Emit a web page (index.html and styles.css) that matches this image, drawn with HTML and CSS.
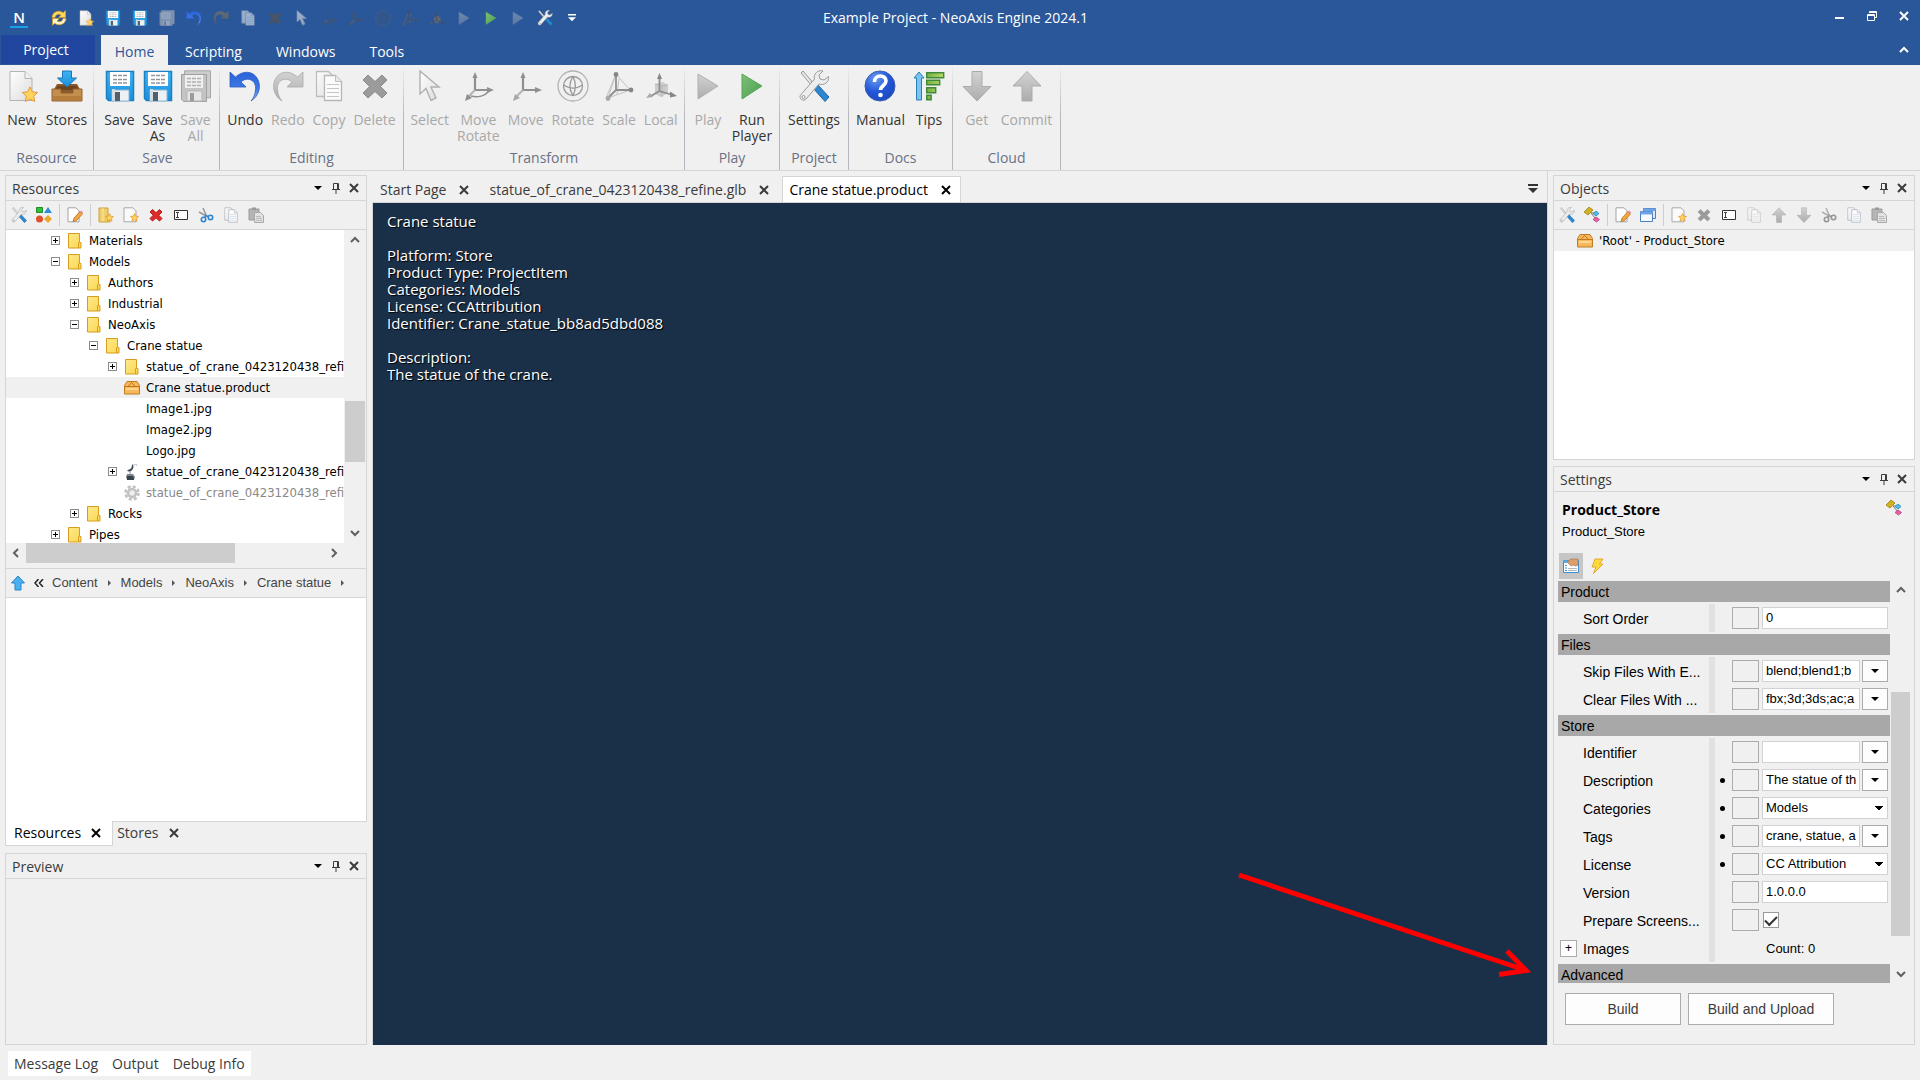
FILE: index.html
```html
<!DOCTYPE html>
<html lang="en">
<head>
<meta charset="utf-8">
<title>Example Project - NeoAxis Engine 2024.1</title>
<link rel="stylesheet" href="styles.css">
</head>
<body>
<svg class="sprite" aria-hidden="true">
  <defs>
    <linearGradient id="g-page" x1="0" y1="0" x2="1" y2="1"><stop offset="0" stop-color="#fff"/><stop offset="1" stop-color="#dcdcdc"/></linearGradient>
    <linearGradient id="g-folder" x1="0" y1="0" x2="1" y2="1"><stop offset="0" stop-color="#ffe98c"/><stop offset="1" stop-color="#fad650"/></linearGradient>
    <linearGradient id="g-blue" x1="0" y1="0" x2="0" y2="1"><stop offset="0" stop-color="#3fb4f2"/><stop offset="1" stop-color="#1a8edb"/></linearGradient>
    <linearGradient id="g-undo" x1="0" y1="0" x2="0" y2="1"><stop offset="0" stop-color="#2a62d8"/><stop offset=".6" stop-color="#3f7ae6"/><stop offset="1" stop-color="#9ab8ee"/></linearGradient>
    <linearGradient id="g-gray" x1="0" y1="0" x2="0" y2="1"><stop offset="0" stop-color="#d2d2d2"/><stop offset="1" stop-color="#adadad"/></linearGradient>
    <linearGradient id="g-green" x1="0" y1="0" x2="1" y2="1"><stop offset="0" stop-color="#7fc07a"/><stop offset="1" stop-color="#4a9f4c"/></linearGradient>
    <radialGradient id="g-help" cx=".35" cy=".25" r=".9"><stop offset="0" stop-color="#6a9bf2"/><stop offset=".5" stop-color="#2257d8"/><stop offset="1" stop-color="#1a44b8"/></radialGradient>
    <linearGradient id="g-tip" x1="0" y1="0" x2="1" y2="0"><stop offset="0" stop-color="#76b043"/><stop offset="1" stop-color="#b6da6a"/></linearGradient>
  </defs>

  <symbol id="star" viewBox="0 0 16 16"><path d="M8 1l2.200 4.600 5 .6-3.700 3.400 1 5L8 12.200l-4.500 2.400 1-5L.8 6.200l5-.6z" fill="#ffd35c" stroke="#e0932a" stroke-width="1.200"/></symbol>

  <symbol id="new" viewBox="0 0 32 32"><path d="M4 1.500h15l7 7V30.500H4z" fill="url(#g-page)" stroke="#b4b4b4"/><path d="M19 1.500v7h7" fill="#f2f2f2" stroke="#b4b4b4"/><path d="M24 17l2.300 4.800 5.200.700-3.800 3.700 1 5.300-4.700-2.500-4.700 2.500 1-5.300-3.800-3.700 5.200-.7z" fill="#ffd45e" stroke="#e19a33"/></symbol>
  <symbol id="stores" viewBox="0 0 32 32"><path d="M6 14h20l5 9H1z" fill="#8a5a2b"/><path d="M4 20l3-4h18l3 4z" fill="#6b431d"/><path d="M1 19h9v4h12v-4h9v12H1z" fill="#c48f4e" stroke="#93602c"/><path d="M2 26h28v4H2z" fill="#b57e3d"/><path d="M11.500 1h9v7h5L16 17 6.500 8h5z" fill="url(#g-blue)" stroke="#1677bb"/></symbol>
  <symbol id="save" viewBox="0 0 32 32"><path d="M2.500 1.500h27v29h-25l-2-2z" fill="url(#g-blue)" stroke="#1b7fc1" stroke-width="1.500"/><path d="M6 2h20v14H6z" fill="#fff"/><path d="M9 5.500h14M9 9.500h14M9 13h14" stroke="#8f979c" stroke-width="1.300" stroke-dasharray="4 1"/><path d="M8 20h17v11H8z" fill="#eef1f3" stroke="#8fb8d2"/><path d="M11 22h5v9h-5z" fill="#53616b"/><path d="M8 19h3v11H8z" fill="#d2dde4"/></symbol>
  <symbol id="saveall" viewBox="0 0 32 32"><path d="M4.500.800h26v27h-26z" fill="#ccc" stroke="#a5a5a5"/><path d="M1.500 4.500h25v27h-23l-2-2z" fill="#c4c4c4" stroke="#a0a0a0"/><path d="M5 5h18v13H5z" fill="#efefef"/><path d="M7 8.500h14M7 12h14M7 15.500h14" stroke="#b0b0b0" stroke-width="1.300" stroke-dasharray="4 1"/><path d="M7 21h15v10H7z" fill="#e6e6e6" stroke="#b5b5b5"/><path d="M10 23h4v8h-4z" fill="#9b9b9b"/></symbol>
  <symbol id="undo" viewBox="0 0 32 32"><path d="M1 2v15h16l-5-5c6-6 16-2 14.500 8-.500 5-2 8-4.500 11 8-5 11-15 6-23S13 1 6.500 7z" fill="url(#g-undo)" stroke="#2c5cc0" stroke-width=".8"/></symbol>
  <symbol id="redo" viewBox="0 0 32 32"><path d="M31 2v15H15l5-5C14 6 4 10 5.500 20c.500 5 2 8 4.500 11C2 26-1 16 4 8S19 1 25.500 7z" fill="url(#g-gray)" stroke="#a9a9a9" stroke-width=".8"/></symbol>
  <symbol id="copy" viewBox="0 0 32 32"><path d="M3.500 1.500h12l5 5v20h-17z" fill="url(#g-page)" stroke="#a9aeb5" stroke-width="1.300"/><path d="M11.500 5.500h11l6 6v19h-17z" fill="#fff" stroke="#a0a6ae" stroke-width="1.300"/><path d="M22.500 5.500v6h6" fill="#e8e8e8" stroke="#a9aeb5"/><path d="M14 14.500h12M14 18.500h12M14 22.500h12M14 26.500h12" stroke="#a5bad8"/></symbol>
  <symbol id="cross" viewBox="0 0 32 32"><path d="M9 5l7 6.500L23 5l5 5-6.500 6.500L28 23l-5 5-7-6.500L9 28l-5-5 6.500-6.500L4 10z" fill="#9b9b9b" stroke="#8b8b8b" stroke-width="1"/></symbol>
  <symbol id="redcross" viewBox="0 0 32 32"><path d="M9 5l7 6.500L23 5l5 5-6.500 6.500L28 23l-5 5-7-6.500L9 28l-5-5 6.500-6.500L4 10z" fill="#e02b2b" stroke="#b51616" stroke-width="2"/></symbol>
  <symbol id="select" viewBox="0 0 32 32"><path d="M6 1v23l6-5.500 5 12 5-2.500-5-11h8z" fill="url(#g-page)" stroke="#b0b0b0" stroke-width="1.400"/></symbol>
  <symbol id="moverotate" viewBox="0 0 32 32"><g fill="none" stroke="#8f8f8f" stroke-width="2.200"><path d="M13 6v14h13"/><path d="M13 20l-7 7" stroke="#b5b5b5"/><path d="M27 21c-4 5-11 7-18 5" stroke-width="1.500"/></g><path d="M10.500 8L13 2l2.500 6zM25 17l7 3-7 3zM3 31l2-7 5 4z" fill="#8f8f8f"/></symbol>
  <symbol id="move" viewBox="0 0 32 32"><g fill="none" stroke="#8f8f8f" stroke-width="2.200"><path d="M13 6v14h13"/><path d="M13 20l-7 7" stroke="#b5b5b5"/></g><path d="M10.500 8L13 2l2.500 6zM25 17l7 3-7 3z" fill="#8f8f8f"/><path d="M3 31l2-7 5 4z" fill="#a8a8a8"/></symbol>
  <symbol id="rotate" viewBox="0 0 32 32"><g fill="none" stroke="#b2b2b2" stroke-width="1.300"><circle cx="16" cy="16" r="15"/><circle cx="16" cy="16" r="9.500" stroke="#999"/><path d="M16 6.500c-4 6-4 13 0 19M16 6.500c3 6 3 13 0 19M6.500 15c6 4 13 4 19 0" stroke="#999"/></g></symbol>
  <symbol id="scale" viewBox="0 0 32 32"><g fill="none" stroke="#c2c2c2"><path d="M13 4L27 20M13 4L5 28M13 4l-10 24M27 20L5 28M16 9l-2 15"/></g><path d="M13 5v15h15M13 20l-8 8" fill="none" stroke="#8f8f8f" stroke-width="1.800"/><circle cx="13" cy="4.500" r="2.400" fill="#868686"/><circle cx="28" cy="20" r="2.400" fill="#868686"/><circle cx="5" cy="28.500" r="2.400" fill="#aaa"/></symbol>
  <symbol id="local" viewBox="0 0 32 32"><path d="M10 14l8-2 5 3v8l-7 4-6-3z" fill="#ccc"/><path d="M10 14l7 2 6-1M17 16v11" stroke="#b5b5b5" fill="none"/><path d="M14.500 7v14l13 4M14.500 21L6 26" fill="none" stroke="#8f8f8f" stroke-width="1.800"/><path d="M12 9l2.500-6L17 9zM25 21.500l7 4.500-7 1.500z" fill="#858585"/><path d="M1 28l4-5 3 4z" fill="#a8a8a8"/></symbol>
  <symbol id="play" viewBox="0 0 32 32"><path d="M6 4l20 12L6 29z" fill="url(#g-gray)" stroke="#b0b0b0"/></symbol>
  <symbol id="run" viewBox="0 0 32 32"><path d="M6 4l20 12L6 29z" fill="url(#g-green)" stroke="#57a558"/></symbol>
  <symbol id="tools" viewBox="0 0 32 32"><path d="M3 3l2-2 12 14-2 2z" fill="#e6e6e6" stroke="#999"/><path d="M15 18l4-4 12 13-4 4.500z" fill="#2c87cf" stroke="#1a66a8"/><path d="M30.500 6.500L26 10l-4-1-1-4 4-4c-5-1.500-10 3-8.500 8L3 24.500c-3 3 1.500 8 5 4.500L21 14c5 2 10.500-2 9.500-7.500z" fill="#ededed" stroke="#9a9a9a"/><circle cx="5.500" cy="27" r="1.500" fill="#fff" stroke="#999"/></symbol>
  <symbol id="help" viewBox="0 0 32 32"><circle cx="16" cy="16" r="15" fill="url(#g-help)" stroke="#3a5fae"/><path d="M10.500 12c0-8 11.500-7.500 11.500-1 0 4.500-5.500 4.500-5.500 9" fill="none" stroke="#fff" stroke-width="3.600"/><circle cx="16.500" cy="25" r="2.300" fill="#fff"/></symbol>
  <symbol id="tips" viewBox="0 0 32 32"><path d="M6 2l5 6H8.500v22h-5V8H1z" fill="#7cc3ee" stroke="#2a7fb8"/><g fill="url(#g-tip)" stroke="#3f8a3a" stroke-width="1.400"><path d="M13.700 2.700h17v5h-17zM13.700 10.200h13v4.500h-13zM13.700 17.700h9v5h-9zM13.700 25.200h4.500v4.500h-4.500z"/></g></symbol>
  <symbol id="get" viewBox="0 0 32 32"><path d="M11 1.500h10v15h9L16 31 2 16.500h9z" fill="url(#g-gray)" stroke="#ababab"/></symbol>
  <symbol id="commit" viewBox="0 0 32 32"><path d="M11 31h10V16h9L16 1.500 2 16h9z" fill="url(#g-gray)" stroke="#ababab"/></symbol>
  <symbol id="refresh" viewBox="0 0 16 16"><path d="M1 7.500C1.500 1.500 8 -.5 12.200 2.800L14.500.5v7H7.800L10 5C7.500 3.300 4.500 4.500 4 7.500z" fill="#ffd95e" stroke="#d89a20" stroke-width=".7"/><path d="M15 8.500C14.500 14.500 8 16.500 3.800 13.200L1.500 15.500v-7h6.700L6 11c2.500 1.700 5.500.5 6-2.500z" fill="#fff3c8" stroke="#d89a20" stroke-width=".7"/></symbol>

  <symbol id="blocks" viewBox="0 0 16 16"><path d="M.5.500h6v5h-6z" fill="#2fc13b" stroke="#1f8e29"/><path d="M12 0l4 6H8z" fill="#2f8de0"/><circle cx="3.500" cy="12" r="3.500" fill="#e2502c"/><path d="M12 8l4 4-4 4-4-4z" fill="#f0a52c"/></symbol>
  <symbol id="edit" viewBox="0 0 16 16"><path d="M1 .800h8l3 3v11H1z" fill="#fff" stroke="#a2a2a2"/><path d="M6 14.500l1-3.500 6-6.500 2.500 2.500-6 6.500z" fill="#f5a63a" stroke="#a8651c" stroke-width=".7"/><path d="M13 4.500l1.200-1 2 2-1 1.300z" fill="#e58ab0"/></symbol>
  <symbol id="folder" viewBox="0 0 16 16"><path d="M1.500.5h11v9h1.500v5.500H1.500z" fill="url(#g-folder)" stroke="#d79d1f"/><path d="M11.500 9.500v5.500" stroke="#d79d1f"/></symbol>
  <symbol id="newfolder" viewBox="0 0 16 16"><path d="M1 1h9v8h2v6H1z" fill="#f0cf68" stroke="#cda23c"/><path d="M5 1v13" stroke="#fae9a8"/><use href="#star" x="7" y="6" width="9" height="9"/></symbol>
  <symbol id="newitem" viewBox="0 0 16 16"><path d="M1 .800h9l3 3v11H1z" fill="#fafafa" stroke="#a9a9a9"/><use href="#star" x="7" y="6" width="9" height="9"/></symbol>
  <symbol id="rename" viewBox="0 0 16 16"><path d="M1.500 3.500h13v9h-13z" fill="#fff" stroke="#333"/><path d="M3 5.500h3M3 10.500h3M4.500 5.500v5" stroke="#444"/></symbol>
  <symbol id="cut" viewBox="0 0 16 16"><path d="M5 1l3.500 8M1 5l9 5" stroke="#9b9b9b" stroke-width="1.600"/><circle cx="5.500" cy="12.500" r="2.200" fill="none" stroke="#2f86d6" stroke-width="1.600"/><circle cx="12.500" cy="10.500" r="2.200" fill="none" stroke="#2f86d6" stroke-width="1.600"/><path d="M8.500 8l-2 2.500M9 9l2 .8" stroke="#2f86d6" stroke-width="1.600"/></symbol>
  <symbol id="paste" viewBox="0 0 16 16"><path d="M1 2h10v11H1z" fill="#b5b5b5" stroke="#9b9b9b"/><path d="M4 .500h4v2.500H4z" fill="#999"/><path d="M6.500 5.500h6l3 3v7h-9z" fill="#e2e2e2" stroke="#a9a9a9"/><path d="M8 9.500h5M8 11.500h6M8 13.500h6" stroke="#bbb"/></symbol>
  <symbol id="nodes" viewBox="0 0 16 16"><path d="M7 6l5 6M7 6h4" stroke="#777"/><path d="M0 5l5-5 4 3-5 5z" fill="#d2b121" stroke="#9b8010" stroke-width=".8"/><path d="M9 6.500l3-2.500 3 2.500L12 9z" fill="#51bbe8" stroke="#2a8ab5" stroke-width=".8"/><path d="M9 12.500l3-2.500 3.500 2.500-3 2.500z" fill="#ea5fa6" stroke="#b93a7c" stroke-width=".8"/></symbol>
  <symbol id="windows" viewBox="0 0 16 16"><path d="M3.500 1.500h12v10h-12z" fill="#dcebfb" stroke="#4a7fc0"/><path d="M3.500 1.500h12v2.500h-12z" fill="#6fa4e6"/><path d="M.5 4.500h12v10H.5z" fill="#f7fbff" stroke="#4a7fc0"/><path d="M.5 4.500h12v3H.5z" fill="#6fa4e6"/></symbol>
  <symbol id="crate" viewBox="0 0 16 16"><path d="M3 1.500h10l2.500 4v8.500H.5V5.500z" fill="#f6b85a" stroke="#c07a22"/><path d="M1 6.500h14M4.500 6l3-3.500L11 6" stroke="#c07a22" fill="none"/><path d="M2 8h12v2H2z" fill="#ffd590"/></symbol>
  <symbol id="statue" viewBox="0 0 16 16"><path d="M4 6c3-1 4-2 4-6 1.500 1 2 3 1 4.500C8 7 6 8 3 7z" fill="#3f4a54"/><path d="M9 1.500l3-1.500 1 2" fill="none" stroke="#b9c0c5"/><path d="M6 7v4" stroke="#8a939b"/><path d="M3 10h6l2 3-1 3H3l-1-3z" fill="#7c868d"/><path d="M3 12h6l1 4H3z" fill="#39434a"/></symbol>
  <symbol id="gear" viewBox="0 0 16 16"><circle cx="8" cy="8" r="6.500" fill="none" stroke="#c2c2c2" stroke-width="2.600" stroke-dasharray="3 2.100"/><circle cx="8" cy="8" r="4" fill="#eee" stroke="#c2c2c2" stroke-width="2.500"/></symbol>
  <symbol id="props" viewBox="0 0 16 16"><path d="M.5 2.500h15v12H.5z" fill="#fff" stroke="#3b8ed0"/><path d="M.5 2.500h15v2.500H.5z" fill="#63ace6"/><path d="M2 7.500h2M2 10h2M2 12.500h2" stroke="#3b8ed0"/><path d="M5 10.500h9M5 12.500h9" stroke="#b5b5b5"/><path d="M5 3l3-2h7v6l-2 1-3-1-2 1-3-3z" fill="#d9a06e" stroke="#a86d3c" stroke-width=".6"/></symbol>
  <symbol id="bolt" viewBox="0 0 16 16"><path d="M6 1h8l-3.500 5H14L4.500 15.500 7 9H3z" fill="#ffd83a" stroke="#dd9a1c" stroke-width=".8"/></symbol>
  <symbol id="upblue" viewBox="0 0 16 16"><path d="M8 1l6.500 7H11v7H5V8H1.500z" fill="#4bb0f0" stroke="#2a85c8"/></symbol>

  <symbol id="down" viewBox="0 0 8 8"><path d="M0 2h8L4 6z"/></symbol>
  <symbol id="right" viewBox="0 0 8 8"><path d="M3 1l3 3-3 3z"/></symbol>
  <symbol id="pin" viewBox="0 0 10 12"><path d="M2.500 7V1.500h4V7M6.500 1.500h1V7M1 7.500h8M5 8v4" fill="none" stroke="currentColor"/></symbol>
  <symbol id="close" viewBox="0 0 10 10"><path d="M1 1l8 8M9 1L1 9" fill="none" stroke="currentColor" stroke-width="2"/></symbol>
  <symbol id="chev" viewBox="0 0 10 10"><path d="M1 7l4-4 4 4" fill="none" stroke="currentColor" stroke-width="2"/></symbol>
  <symbol id="overflow" viewBox="0 0 10 10"><path d="M0 0h10v2H0zM0 4h10L5 9z"/></symbol>
</svg>

<header class="titlebar">
  <div class="quick">
    <div class="logo">N</div>
    <button class="qbtn" aria-label="Refresh"><svg><use href="#refresh"/></svg></button>
    <button class="qbtn" aria-label="New"><svg><use href="#new"/></svg></button>
    <button class="qbtn" aria-label="Save"><svg><use href="#save"/></svg></button>
    <button class="qbtn" aria-label="Save As"><svg><use href="#save"/></svg></button>
    <button class="qbtn half" aria-label="Save All"><svg><use href="#saveall"/></svg></button>
    <button class="qbtn" aria-label="Undo"><svg><use href="#undo"/></svg></button>
    <button class="qbtn dark" aria-label="Redo"><svg><use href="#redo"/></svg></button>
    <button class="qbtn half" aria-label="Copy"><svg><use href="#copy"/></svg></button>
    <button class="qbtn dark" aria-label="Delete"><svg><use href="#cross"/></svg></button>
    <button class="qbtn half" aria-label="Select"><svg><use href="#select"/></svg></button>
    <button class="qbtn dark" aria-label="Move Rotate"><svg><use href="#moverotate"/></svg></button>
    <button class="qbtn dark" aria-label="Move"><svg><use href="#move"/></svg></button>
    <button class="qbtn dark" aria-label="Rotate"><svg><use href="#rotate"/></svg></button>
    <button class="qbtn dark" aria-label="Scale"><svg><use href="#scale"/></svg></button>
    <button class="qbtn dark" aria-label="Local"><svg><use href="#local"/></svg></button>
    <button class="qbtn faint" aria-label="Play"><svg><use href="#play"/></svg></button>
    <button class="qbtn" aria-label="Run Player"><svg><use href="#run"/></svg></button>
    <button class="qbtn faint" aria-label="Step"><svg><use href="#play"/></svg></button>
    <button class="qbtn" aria-label="Settings"><svg><use href="#tools"/></svg></button>
    <button class="qbtn more" aria-label="Customize"><svg><use href="#overflow"/></svg></button>
  </div>
  <div class="app-title">Example Project - NeoAxis Engine 2024.1</div>
  <div class="winctl">
    <button aria-label="Minimize"><svg viewBox="0 0 12 12"><path d="M1 7h9v2H1z" fill="currentColor"/></svg></button>
    <button aria-label="Restore"><svg viewBox="0 0 12 12"><path d="M3.500 3V1.500h7v6H9M3.500 2.500h7M1.500 4.500h7v6h-7zM1.500 5.500h7" fill="none" stroke="currentColor"/></svg></button>
    <button aria-label="Close"><svg><use href="#close"/></svg></button>
  </div>
</header>

<nav class="tabs">
  <button class="tab project">Project</button>
  <button class="tab active">Home</button>
  <button class="tab">Scripting</button>
  <button class="tab">Windows</button>
  <button class="tab">Tools</button>
  <button class="collapse" aria-label="Collapse ribbon"><svg><use href="#chev"/></svg></button>
</nav>

<div class="ribbon">
  <section class="group g-resource"><div class="items">
    <button class="item"><svg><use href="#new"/></svg>New</button>
    <button class="item"><svg><use href="#stores"/></svg>Stores</button>
  </div><h2>Resource</h2></section>
  <section class="group g-save"><div class="items">
    <button class="item"><svg><use href="#save"/></svg>Save</button>
    <button class="item"><svg><use href="#save"/></svg>Save<br>As</button>
    <button class="item" disabled><svg><use href="#saveall"/></svg>Save<br>All</button>
  </div><h2>Save</h2></section>
  <section class="group g-editing"><div class="items">
    <button class="item"><svg><use href="#undo"/></svg>Undo</button>
    <button class="item" disabled><svg><use href="#redo"/></svg>Redo</button>
    <button class="item" disabled><svg class="off"><use href="#copy"/></svg>Copy</button>
    <button class="item" disabled><svg><use href="#cross"/></svg>Delete</button>
  </div><h2>Editing</h2></section>
  <section class="group g-transform"><div class="items">
    <button class="item" disabled><svg><use href="#select"/></svg>Select</button>
    <button class="item" disabled><svg><use href="#moverotate"/></svg>Move<br>Rotate</button>
    <button class="item" disabled><svg><use href="#move"/></svg>Move</button>
    <button class="item" disabled><svg><use href="#rotate"/></svg>Rotate</button>
    <button class="item" disabled><svg><use href="#scale"/></svg>Scale</button>
    <button class="item" disabled><svg><use href="#local"/></svg>Local</button>
  </div><h2>Transform</h2></section>
  <section class="group g-play"><div class="items">
    <button class="item" disabled><svg><use href="#play"/></svg>Play</button>
    <button class="item"><svg><use href="#run"/></svg>Run<br>Player</button>
  </div><h2>Play</h2></section>
  <section class="group g-project"><div class="items">
    <button class="item"><svg><use href="#tools"/></svg>Settings</button>
  </div><h2>Project</h2></section>
  <section class="group g-docs"><div class="items">
    <button class="item"><svg><use href="#help"/></svg>Manual</button>
    <button class="item"><svg><use href="#tips"/></svg>Tips</button>
  </div><h2>Docs</h2></section>
  <section class="group g-cloud"><div class="items">
    <button class="item" disabled><svg><use href="#get"/></svg>Get</button>
    <button class="item" disabled><svg><use href="#commit"/></svg>Commit</button>
  </div><h2>Cloud</h2></section>
</div>

<main class="workspace">
  <aside class="column left">
    <div class="stack resources">
      <section class="panel">
        <header class="phead"><h2>Resources</h2><button aria-label="Menu"><svg class="tri"><use href="#down"/></svg></button><button aria-label="Pin"><svg class="pin"><use href="#pin"/></svg></button><button aria-label="Close"><svg><use href="#close"/></svg></button></header>
        <div class="toolbar">
          <button aria-label="Options"><svg><use href="#tools"/></svg></button>
          <button aria-label="Types"><svg><use href="#blocks"/></svg></button>
          <span class="sep"></span>
          <button aria-label="Edit"><svg><use href="#edit"/></svg></button>
          <span class="sep"></span>
          <button aria-label="New folder"><svg><use href="#newfolder"/></svg></button>
          <button aria-label="New resource"><svg><use href="#newitem"/></svg></button>
          <button aria-label="Delete"><svg><use href="#redcross"/></svg></button>
          <button aria-label="Rename"><svg><use href="#rename"/></svg></button>
          <button aria-label="Cut"><svg><use href="#cut"/></svg></button>
          <button aria-label="Copy"><svg><use href="#copy"/></svg></button>
          <button aria-label="Paste"><svg><use href="#paste"/></svg></button>
        </div>
        <div class="treebox">
          <ul class="tree">
            <li class="l0"><i class="exp plus"></i><svg><use href="#folder"/></svg>Materials</li>
            <li class="l0"><i class="exp"></i><svg><use href="#folder"/></svg>Models</li>
            <li class="l1"><i class="exp plus"></i><svg><use href="#folder"/></svg>Authors</li>
            <li class="l1"><i class="exp plus"></i><svg><use href="#folder"/></svg>Industrial</li>
            <li class="l1"><i class="exp"></i><svg><use href="#folder"/></svg>NeoAxis</li>
            <li class="l2"><i class="exp"></i><svg><use href="#folder"/></svg>Crane statue</li>
            <li class="l3"><i class="exp plus"></i><svg><use href="#folder"/></svg>statue_of_crane_0423120438_refine</li>
            <li class="l3 selected"><i class="exp none"></i><svg><use href="#crate"/></svg>Crane statue.product</li>
            <li class="l3"><i class="exp none"></i><svg></svg>Image1.jpg</li>
            <li class="l3"><i class="exp none"></i><svg></svg>Image2.jpg</li>
            <li class="l3"><i class="exp none"></i><svg></svg>Logo.jpg</li>
            <li class="l3"><i class="exp plus"></i><svg><use href="#statue"/></svg>statue_of_crane_0423120438_refine</li>
            <li class="l3 dim"><i class="exp none"></i><svg><use href="#gear"/></svg>statue_of_crane_0423120438_refine</li>
            <li class="l1"><i class="exp plus"></i><svg><use href="#folder"/></svg>Rocks</li>
            <li class="l0"><i class="exp plus"></i><svg><use href="#folder"/></svg>Pipes</li>
          </ul>
          <div class="vscroll"><svg><use href="#chev"/></svg><span class="before"></span><span class="thumb"></span><span class="after"></span><svg class="flip"><use href="#chev"/></svg></div>
          <div class="hscroll"><svg class="to-left"><use href="#chev"/></svg><span class="thumb"></span><span class="rest"></span><svg class="to-right"><use href="#chev"/></svg></div>
        </div>
        <nav class="crumbs">
          <button class="up" aria-label="Up"><svg><use href="#upblue"/></svg></button>
          <svg class="back" viewBox="0 0 10 8"><path d="M4.500 0L1 4l3.500 4M9 0L5.500 4 9 8" fill="none" stroke="#222" stroke-width="1.500"/></svg>
          <a href="#content">Content</a><svg class="arrow"><use href="#right"/></svg>
          <a href="#models">Models</a><svg class="arrow"><use href="#right"/></svg>
          <a href="#neoaxis">NeoAxis</a><svg class="arrow"><use href="#right"/></svg>
          <a href="#crane">Crane statue</a><svg class="arrow"><use href="#right"/></svg>
        </nav>
        <div class="files"></div>
      </section>
      <div class="ptabs">
        <button class="ptab on">Resources<svg><use href="#close"/></svg></button>
        <button class="ptab">Stores<svg><use href="#close"/></svg></button>
      </div>
    </div>
    <section class="panel preview">
      <header class="phead"><h2>Preview</h2><button aria-label="Menu"><svg class="tri"><use href="#down"/></svg></button><button aria-label="Pin"><svg class="pin"><use href="#pin"/></svg></button><button aria-label="Close"><svg><use href="#close"/></svg></button></header>
    </section>
  </aside>

  <section class="document">
    <div class="dtabs">
      <button class="dtab">Start Page<svg><use href="#close"/></svg></button>
      <button class="dtab">statue_of_crane_0423120438_refine.glb<svg><use href="#close"/></svg></button>
      <button class="dtab on">Crane statue.product<svg><use href="#close"/></svg></button>
      <button class="dlist" aria-label="Documents"><svg><use href="#overflow"/></svg></button>
    </div>
    <div class="viewport">
      <p>Crane statue</p>
      <p>Platform: Store<br>Product Type: ProjectItem<br>Categories: Models<br>License: CCAttribution<br>Identifier: Crane_statue_bb8ad5dbd088</p>
      <p>Description:<br>The statue of the crane.</p>
      <svg class="pointer" viewBox="0 0 310 120"><path d="M9 10L292 104M277 86l19 19.500-27 4" fill="none" stroke="#f00" stroke-width="5" stroke-miterlimit="8"/></svg>
    </div>
  </section>

  <aside class="column">
    <section class="panel objects">
      <header class="phead"><h2>Objects</h2><button aria-label="Menu"><svg class="tri"><use href="#down"/></svg></button><button aria-label="Pin"><svg class="pin"><use href="#pin"/></svg></button><button aria-label="Close"><svg><use href="#close"/></svg></button></header>
      <div class="toolbar">
        <button aria-label="Options"><svg><use href="#tools"/></svg></button>
        <button aria-label="Flow"><svg><use href="#nodes"/></svg></button>
        <span class="sep"></span>
        <button aria-label="Edit"><svg><use href="#edit"/></svg></button>
        <button aria-label="Windows"><svg><use href="#windows"/></svg></button>
        <span class="sep"></span>
        <button aria-label="New object"><svg><use href="#newitem"/></svg></button>
        <button aria-label="Delete" disabled><svg><use href="#cross"/></svg></button>
        <button aria-label="Rename"><svg><use href="#rename"/></svg></button>
        <button aria-label="Clone" disabled><svg class="off"><use href="#copy"/></svg></button>
        <button aria-label="Move up" disabled><svg><use href="#commit"/></svg></button>
        <button aria-label="Move down" disabled><svg><use href="#get"/></svg></button>
        <button aria-label="Cut" disabled><svg class="off"><use href="#cut"/></svg></button>
        <button aria-label="Copy"><svg><use href="#copy"/></svg></button>
        <button aria-label="Paste" disabled><svg><use href="#paste"/></svg></button>
      </div>
      <ul class="tree flat"><li class="selected"><svg><use href="#crate"/></svg>'Root' - Product_Store</li></ul>
    </section>

    <section class="panel settings">
      <header class="phead"><h2>Settings</h2><button aria-label="Menu"><svg class="tri"><use href="#down"/></svg></button><button aria-label="Pin"><svg class="pin"><use href="#pin"/></svg></button><button aria-label="Close"><svg><use href="#close"/></svg></button></header>
      <div class="subject"><div><h3>Product_Store</h3><p>Product_Store</p></div><svg><use href="#nodes"/></svg></div>
      <div class="modes"><button class="on" aria-label="Properties"><svg><use href="#props"/></svg></button><button aria-label="Events"><svg><use href="#bolt"/></svg></button></div>
      <div class="grid-wrap">
        <div class="props">
          <h4>Product</h4>
          <div class="rows">
            <div class="row"><label for="f-sort">Sort Order</label><span class="bar"></span><i class="dot unset"></i><button class="box" aria-label="Reference"></button><input id="f-sort" type="text" value="0"></div>
          </div>
          <h4>Files</h4>
          <div class="rows">
            <div class="row"><label for="f-skip">Skip Files With E...</label><span class="bar"></span><i class="dot unset"></i><button class="box" aria-label="Reference"></button><input id="f-skip" type="text" value="blend;blend1;b"><button class="drop" aria-label="Open"><svg><use href="#down"/></svg></button></div>
            <div class="row"><label for="f-clear">Clear Files With ...</label><span class="bar"></span><i class="dot unset"></i><button class="box" aria-label="Reference"></button><input id="f-clear" type="text" value="fbx;3d;3ds;ac;a"><button class="drop" aria-label="Open"><svg><use href="#down"/></svg></button></div>
          </div>
          <h4>Store</h4>
          <div class="rows">
            <div class="row"><label for="f-id">Identifier</label><span class="bar"></span><i class="dot unset"></i><button class="box" aria-label="Reference"></button><input id="f-id" type="text" value=""><button class="drop" aria-label="Open"><svg><use href="#down"/></svg></button></div>
            <div class="row"><label for="f-desc">Description</label><span class="bar"></span><i class="dot"></i><button class="box" aria-label="Reference"></button><input id="f-desc" type="text" value="The statue of th"><button class="drop" aria-label="Open"><svg><use href="#down"/></svg></button></div>
            <div class="row"><label for="f-cat">Categories</label><span class="bar"></span><i class="dot"></i><button class="box" aria-label="Reference"></button><select id="f-cat"><option>Models</option></select></div>
            <div class="row"><label for="f-tags">Tags</label><span class="bar"></span><i class="dot"></i><button class="box" aria-label="Reference"></button><input id="f-tags" type="text" value="crane, statue, a"><button class="drop" aria-label="Open"><svg><use href="#down"/></svg></button></div>
            <div class="row"><label for="f-lic">License</label><span class="bar"></span><i class="dot"></i><button class="box" aria-label="Reference"></button><select id="f-lic"><option>CC Attribution</option></select></div>
            <div class="row"><label for="f-ver">Version</label><span class="bar"></span><i class="dot unset"></i><button class="box" aria-label="Reference"></button><input id="f-ver" type="text" value="1.0.0.0"></div>
            <div class="row"><label for="f-prep">Prepare Screens...</label><span class="bar"></span><i class="dot unset"></i><button class="box" aria-label="Reference"></button><input id="f-prep" type="checkbox" checked></div>
            <div class="row nested"><button class="expand" aria-label="Expand">+</button><span class="name">Images</span><span class="bar"></span><span class="count">Count: 0</span></div>
          </div>
          <h4 class="last">Advanced</h4>
        </div>
        <div class="vscroll"><svg><use href="#chev"/></svg><span class="before"></span><span class="thumb"></span><span class="after"></span><svg class="flip"><use href="#chev"/></svg></div>
      </div>
      <div class="actions"><button>Build</button><button class="wide">Build and Upload</button></div>
    </section>
  </aside>
</main>

<footer class="dock">
  <div class="docktabs"><button>Message Log</button><button>Output</button><button>Debug Info</button></div>
</footer>
</body>
</html>
```
FILE: styles.css
```css
* { box-sizing: border-box; }

:root {
  --ui: "Open Sans", "Noto Sans", sans-serif;
  --tree: "DejaVu Sans Condensed", "DejaVu Sans", sans-serif;
  --grid: "Liberation Sans", Arial, sans-serif;
  --blue: #2a579a;
  --face: #f0f0f0;
  --line: #d5d5d5;
}

body {
  margin: 0;
  min-height: 100vh;
  display: flex;
  flex-direction: column;
  background: var(--face);
  font: 14px/16px var(--ui);
  color: #3b3b3b;
}

.sprite { position: absolute; width: 0; height: 0; }
svg { display: block; flex: none; }
h2, h3, h4, p, ul { margin: 0; padding: 0; font: inherit; }
button { margin: 0; padding: 0; border: 0; background: none; color: inherit; font: inherit; }
.off { filter: grayscale(1); opacity: .75; }

/* Title bar */
.titlebar {
  display: grid;
  grid-template-columns: 1fr auto 1fr;
  height: 35px;
  background: var(--blue);
  color: #fff;
}
.quick { display: flex; align-items: center; }
.logo {
  width: 18px;
  margin: 0 17px 0 10px;
  border-bottom: 2px solid #18a0e8;
  font-weight: 600;
  font-size: 15px;
  line-height: 18px;
  text-align: center;
}
.qbtn { width: 27px; display: flex; justify-content: center; }
.qbtn svg { width: 16px; height: 16px; }
.half { opacity: .55; }
.faint { opacity: .4; }
.dark { filter: brightness(.55); opacity: .75; }
.more svg { width: 8px; height: 8px; fill: #fff; }
.app-title { padding-right: 9px; line-height: 36px; }
.winctl { display: flex; justify-content: flex-end; }
.winctl button { width: 32px; height: 32px; display: grid; place-items: center; }
.winctl svg { width: 12px; height: 12px; }
.winctl button:last-child svg { width: 10px; height: 10px; }

/* Ribbon tabs */
.tabs { display: flex; height: 30px; background: var(--blue); color: #fff; }
.tab { padding: 4px 17px 0; }
.tab.project { width: 94px; padding: 0 4px 0 0; margin: 0 6px 1px 1px; background: #2046a0; }
.tab.active { background: var(--face); color: var(--blue); padding: 4px 0 0; width: 67px; }
.collapse { width: 32px; margin-left: auto; display: grid; place-items: center; }
.collapse svg { width: 10px; height: 10px; }

/* Ribbon */
.ribbon { display: flex; height: 106px; border-bottom: 1px solid var(--line); }
.group {
  display: flex;
  flex-direction: column;
  justify-content: space-between;
  padding: 5px 0 3px;
  border-right: 1px solid;
  border-image: linear-gradient(#f0f0f0, #b4b8be 50%) 1;
  color: #6a7184;
  text-align: center;
}
.group h2 { line-height: 18px; }
.g-resource { width: 94px; }
.g-save { width: 126px; padding-left: 2px; }
.g-save .item { padding: 0 3px; }
.g-editing { width: 184px; }
.g-transform { width: 281px; }
.g-play { width: 95px; }
.g-project { width: 69px; }
.g-docs { width: 104px; }
.g-cloud { width: 108px; }
.items { display: flex; justify-content: center; align-items: flex-start; }
.item { padding: 0 4px; color: #333; }
.item:disabled { color: #a8a8a8; }
.item svg { width: 32px; height: 32px; margin: 0 auto 10px; }

/* Work area */
.workspace {
  flex: 1;
  display: grid;
  grid-template-columns: 362px minmax(0, 1fr) 362px;
  gap: 5px;
  padding: 0 5px;
}
.column { display: flex; flex-direction: column; gap: 6px; padding-top: 4px; min-width: 0; }
.column.left { gap: 7px; }
.panel { border: 1px solid var(--line); display: flex; flex-direction: column; }
.stack { display: flex; flex-direction: column; }
.resources { flex: 672; }
.resources .panel { flex: 1; }
.preview { flex: 0 0 192px; }

.phead {
  display: flex;
  align-items: center;
  height: 25px;
  padding: 0 3px 0 6px;
  border-bottom: 1px solid var(--line);
}
.phead h2 { flex: 1; padding-top: 2px; }
.phead button { width: 18px; height: 22px; display: grid; place-items: center; }
.phead svg { width: 10px; height: 10px; }
.phead .tri { width: 8px; height: 8px; }
.phead .pin { width: 10px; height: 12px; }

.toolbar { display: flex; align-items: center; height: 29px; border-bottom: 1px solid var(--line); }
.toolbar button { width: 25px; display: flex; justify-content: center; }
.toolbar svg { width: 16px; height: 16px; }
.sep { width: 1px; height: 22px; margin: 0 2px 0 3px; background: #cdcdcd; }

/* Tree */
.treebox {
  display: grid;
  grid-template-columns: minmax(0, 1fr) 22px;
  padding-bottom: 5px;
  border-bottom: 1px solid var(--line);
}
.tree { list-style: none; background: #fff; color: #000; font: 13px/21px var(--tree); overflow: hidden; }
.treebox .tree { height: 313px; }
.tree li { display: flex; align-items: center; height: 21px; white-space: nowrap; }
.tree svg { width: 16px; height: 16px; margin: 0 6px 0 7px; }
.tree .l0 { padding-left: 45px; }
.tree .l1 { padding-left: 64px; }
.tree .l2 { padding-left: 83px; }
.tree .l3 { padding-left: 102px; }
.tree .selected { background: var(--face); }
.tree .dim { color: #888; }
.exp {
  flex: none;
  width: 9px;
  height: 9px;
  border: 1px solid #8c8c8c;
  background: linear-gradient(#000, #000) center / 5px 1px no-repeat;
}
.exp.plus {
  background:
    linear-gradient(#000, #000) center / 5px 1px no-repeat,
    linear-gradient(#000, #000) center / 1px 5px no-repeat;
}
.exp.none { visibility: hidden; }
.flat { flex: 1; }
.flat .selected { padding-left: 16px; }

.vscroll { display: flex; flex-direction: column; align-items: center; color: #606060; }
.vscroll svg, .hscroll svg { width: 10px; height: 10px; margin: 5px; }
.vscroll .thumb { width: 20px; background: #cdcdcd; }
.treebox .before { flex: 151; }
.treebox .vscroll .thumb { flex: 61; }
.treebox .after { flex: 61; }
.flip { transform: rotate(180deg); }
.hscroll { grid-column: 1 / -1; display: flex; height: 20px; margin-right: 22px; color: #606060; }
.hscroll .thumb { flex: 209; background: #cdcdcd; }
.hscroll .rest { flex: 89; }
.hscroll .to-left { transform: rotate(-90deg); }
.hscroll .to-right { transform: rotate(90deg); }

.crumbs { display: flex; align-items: center; height: 29px; padding-left: 4px; border-bottom: 1px solid var(--line); font: 13px/16px var(--grid); }
.crumbs .up svg { width: 16px; height: 16px; }
.crumbs .back { width: 10px; height: 8px; margin: 0 8px; }
.crumbs a { color: #444; text-decoration: none; }
.crumbs .arrow { width: 8px; height: 8px; margin: 0 8px 0 7px; fill: #555; }
.files { flex: 1; background: #fff; }

.ptabs { display: flex; height: 25px; margin-top: -1px; }
.ptab { display: flex; align-items: center; gap: 10px; padding: 0 12px 2px 4px; }
.ptab svg { width: 10px; height: 10px; }
.ptab.on { padding: 0 11px 0 8px; background: #fff; color: #000; border: 1px solid var(--line); border-top: 0; }

/* Documents */
.document { display: flex; flex-direction: column; border-right: 1px solid var(--line); }
.dtabs { display: flex; height: 32px; padding-top: 5px; border-bottom: 1px solid var(--line); }
.dtab { display: flex; align-items: center; gap: 13px; padding: 1px 12px 0 7px; border: 1px solid transparent; border-bottom: 0; }
.dtab + .dtab { padding-left: 6px; }
.dtab svg { width: 10px; height: 10px; }
.dtab.on { background: #fff; border-color: var(--line); color: #000; padding: 1px 9px 0 6px; }
.dlist { width: 28px; margin-left: auto; display: grid; place-items: center; }
.dlist svg { width: 10px; height: 10px; fill: #333; }
.viewport {
  position: relative;
  flex: 1;
  padding: 10px 14px;
  border-left: 1px solid var(--line);
  background: #1a3049;
  color: #fff;
  font-size: 15px;
  line-height: 17px;
  text-shadow: 1px 1px 1px #000;
}
.viewport p { margin-bottom: 17px; }
.pointer { position: absolute; right: 7px; bottom: 60px; width: 310px; height: 120px; }

/* Objects and settings */
.objects { flex: 286; }
.settings { flex: 0 0 579px; }
.subject { display: flex; justify-content: space-between; height: 61px; padding: 8px 12px 0 8px; color: #000; }
.subject h3 { font-weight: 700; line-height: 20px; }
.subject p { font: 13px/24px var(--grid); }
.subject svg { width: 16px; height: 16px; margin: 0; }
.modes { display: flex; gap: 2px; height: 28px; padding: 0 0 2px 5px; }
.modes button { width: 24px; display: grid; place-items: center; }
.modes .on { background: #c6c6c6; }
.modes svg { width: 16px; height: 16px; }

.grid-wrap { display: flex; height: 402px; padding-left: 4px; font: 14px/21px var(--grid); color: #000; }
.props { width: 332px; overflow: hidden; }
.props h4 { height: 21px; padding: 1px 0 0 3px; background: #a8a8a8; }
.props .last { height: 19px; }
.rows { padding: 2px 0; }
.row { display: flex; align-items: center; height: 28px; padding: 0 2px 0 25px; }
.row label, .row .name { width: 126px; padding-top: 2px; white-space: nowrap; }
.bar { flex: none; width: 6px; height: 28px; background: #e1e1e1; }
.dot { flex: none; width: 5px; height: 5px; margin: 0 7px 0 5px; border-radius: 50%; background: #000; }
.dot.unset { visibility: hidden; }
.box { flex: none; width: 27px; height: 22px; margin-right: 3px; border: 1px solid #acacac; }
.row input[type="text"], .row select {
  flex: 1;
  min-width: 0;
  height: 22px;
  margin: 0;
  padding: 0 3px 1px;
  border: 1px solid #d2d2d6;
  border-radius: 0;
  background-color: #fff;
  color: #000;
  font: 13px/18px var(--grid);
}
.row select {
  appearance: none;
  background-image: conic-gradient(from -45deg at 50% 100%, #000 90deg, transparent 0);
  background-size: 8px 4px;
  background-position: right 4px center;
  background-repeat: no-repeat;
}
.drop { flex: none; width: 26px; height: 22px; margin-left: 2px; border: 1px solid #acacac; background: #fdfdfd; display: grid; place-items: center; }
.drop svg { width: 8px; height: 8px; }
.row input[type="checkbox"] {
  appearance: none;
  width: 16px;
  height: 16px;
  margin: 0 0 0 1px;
  border: 1px solid #999;
  background: #fff;
  display: grid;
  place-items: center;
}
.row input[type="checkbox"]::after {
  content: "";
  width: 10px;
  height: 5px;
  border: solid #333;
  border-width: 0 0 2px 2px;
  transform: translateY(-1px) rotate(-45deg);
}
.nested { padding-left: 2px; }
.expand { width: 17px; height: 17px; margin-right: 6px; border: 1px solid #acacac; background: #fdfdfd; font-size: 12px; line-height: 12px; }
.count { margin-left: 51px; font-size: 13px; }
.grid-wrap .vscroll { width: 21px; }
.grid-wrap .vscroll svg { margin: 4px; }
.grid-wrap .thumb { flex: 244; width: 19px; }
.grid-wrap .before { flex: 93; }
.grid-wrap .after { flex: 29; }

.actions { display: flex; gap: 7px; padding: 10px 11px; font: 14px/18px var(--grid); }
.actions button { width: 116px; height: 32px; border: 1px solid #acacac; background: #fdfdfd; }
.actions .wide { width: 146px; }

/* Bottom dock */
.dock { padding: 6px 8px 4px; }
.docktabs { display: flex; gap: 14px; width: fit-content; height: 25px; padding: 0 6px; background: #fff; }
```
